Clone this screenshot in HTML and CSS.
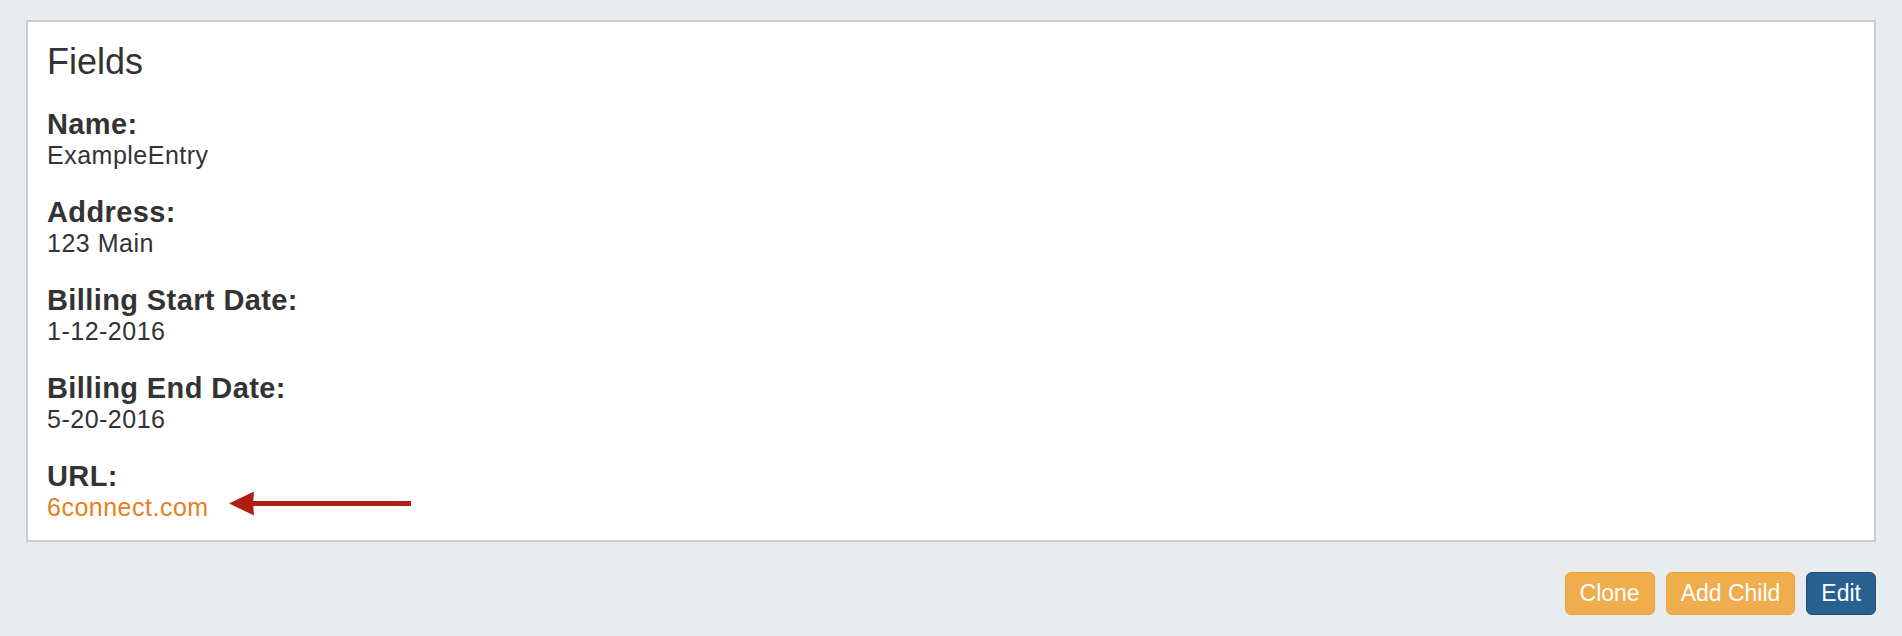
FILE: index.html
```html
<!DOCTYPE html>
<html>
<head>
<meta charset="utf-8">
<link rel="stylesheet" href="styles.css">
</head>
<body>
<div class="page">
  <section class="panel">
    <h3 class="panel-title">Fields</h3>
    <div class="field">
      <div class="field-label">Name:</div>
      <div class="field-value">ExampleEntry</div>
    </div>
    <div class="field">
      <div class="field-label">Address:</div>
      <div class="field-value">123 Main</div>
    </div>
    <div class="field">
      <div class="field-label">Billing Start Date:</div>
      <div class="field-value">1-12-2016</div>
    </div>
    <div class="field">
      <div class="field-label">Billing End Date:</div>
      <div class="field-value">5-20-2016</div>
    </div>
    <div class="field">
      <div class="field-label">URL:</div>
      <div class="field-value annotated">
        <a class="field-link" href="#">6connect.com</a>
        <svg class="arrow" width="182" height="25" viewBox="0 0 182 25">
          <rect x="22" y="10" width="160" height="5" fill="#b21d14"/>
          <polygon points="0,12.5 25,0.5 24,12.5 25,24.5" fill="#b21d14"/>
        </svg>
      </div>
    </div>
  </section>
  <div class="actions">
    <button class="btn btn-warning">Clone</button>
    <button class="btn btn-warning">Add Child</button>
    <button class="btn btn-primary">Edit</button>
  </div>
</div>
</body>
</html>
```

FILE: styles.css
```css
html, body {
  margin: 0;
  padding: 0;
  background: #e8ecef;
}

body {
  font-family: "Liberation Sans", Arial, Helvetica, sans-serif;
  color: #333;
}

.page {
  padding: 20px 26px 0 26px;
  display: flex;
  flex-direction: column;
}

.panel {
  background: #fff;
  border: 2px solid #cccccc;
  padding: 20px 19px 18px 19px;
  height: 522px;
  box-sizing: border-box;
}

.panel-title {
  margin: 0 0 27px 0;
  font-size: 36px;
  font-weight: normal;
  line-height: 40px;
}

.field {
  margin-top: 26px;
}

.panel-title + .field {
  margin-top: 0;
}

.field-label {
  font-size: 29px;
  font-weight: bold;
  line-height: 30px;
  letter-spacing: 0.4px;
}

.field-value {
  font-size: 25px;
  line-height: 32px;
  letter-spacing: 0.5px;
}

.annotated {
  position: relative;
}

.field-link {
  color: #e67f22;
  text-decoration: none;
}

.arrow {
  position: absolute;
  left: 182px;
  top: 0;
}

.actions {
  display: flex;
  justify-content: flex-end;
  gap: 11px;
  margin-top: 30px;
}

.btn {
  font-family: "Liberation Sans", Arial, Helvetica, sans-serif;
  font-size: 23px;
  height: 43px;
  padding: 0 14px;
  border-radius: 6px;
  border: 1px solid transparent;
  color: #fff;
  line-height: 41px;
  cursor: pointer;
}

.btn-warning {
  background: #f0ad4e;
  border-color: #eea236;
}

.btn-primary {
  background: #286090;
  border-color: #204d74;
}
```
